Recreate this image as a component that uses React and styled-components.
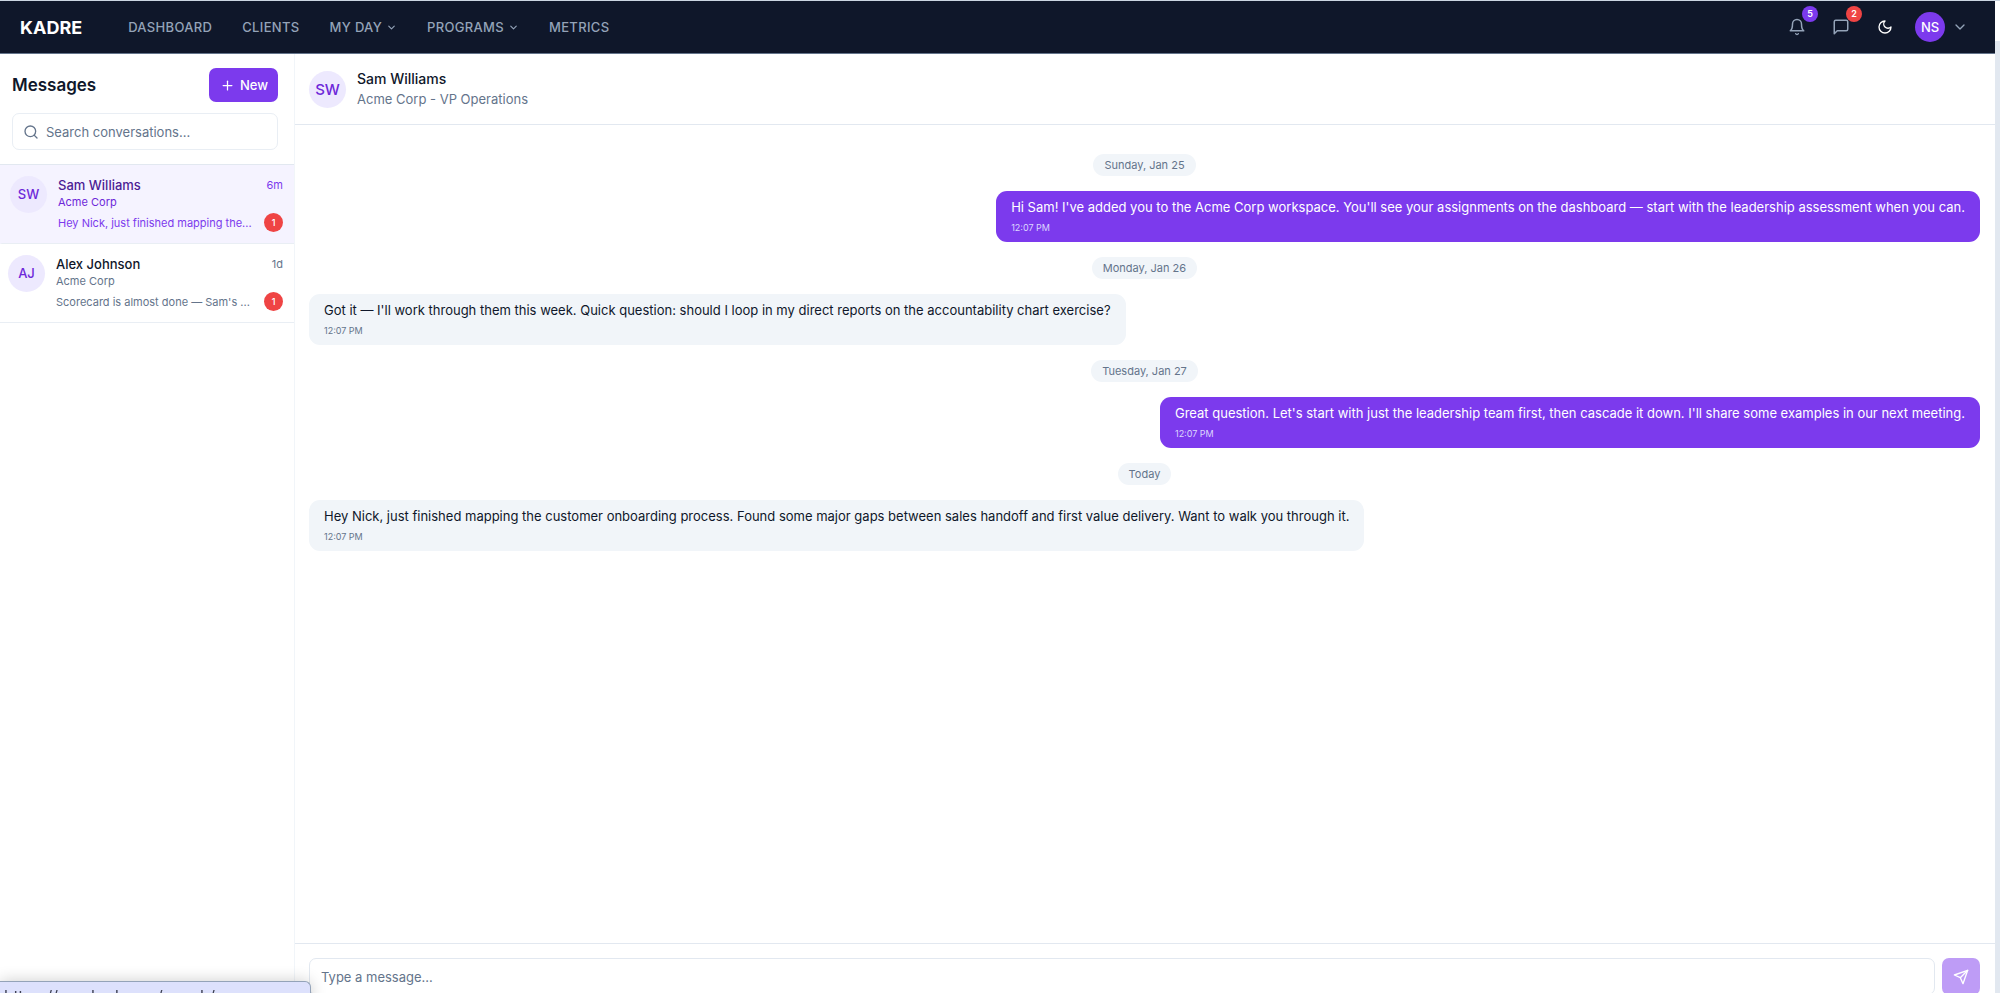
import React, { useState } from 'react'
import styled, { createGlobalStyle } from 'styled-components'
import { ChevronDown, Plus, Search } from 'lucide-react'

const links = [
    { label: "Dashboard" },
    { label: "Clients" },
    { label: "My Day", menu: true },
    { label: "Programs", menu: true },
    { label: "Metrics" },
]

const conversations = [
    { id: 1, initials: "SW", name: "Sam Williams", company: "Acme Corp", time: "6m", unread: 1, preview: "Hey Nick, just finished mapping the..." },
    { id: 2, initials: "AJ", name: "Alex Johnson", company: "Acme Corp", time: "1d", unread: 1, preview: "Scorecard is almost done — Sam's ..." },
]

const days = [
    { day: "Sunday, Jan 25", mine: true, text: "Hi Sam! I've added you to the Acme Corp workspace. You'll see your assignments on the dashboard — start with the leadership assessment when you can." },
    { day: "Monday, Jan 26", mine: false, text: "Got it — I'll work through them this week. Quick question: should I loop in my direct reports on the accountability chart exercise?" },
    { day: "Tuesday, Jan 27", mine: true, text: "Great question. Let's start with just the leadership team first, then cascade it down. I'll share some examples in our next meeting." },
    { day: "Today", mine: false, text: "Hey Nick, just finished mapping the customer onboarding process. Found some major gaps between sales handoff and first value delivery. Want to walk you through it." },
]

const Icon = ({ size, children }) => (
    <svg width={size} height={size} viewBox="0 0 24 24" fill="none" stroke="currentColor" strokeWidth="2" strokeLinecap="round" strokeLinejoin="round">
        {children}
    </svg>
)

const BellIcon = () => (
    <Icon size={18}>
        <path d="M6 8a6 6 0 0 1 12 0c0 7 3 9 3 9H3s3-2 3-9" />
        <path d="M10.3 21a1.94 1.94 0 0 0 3.4 0" />
    </Icon>
)

const MessageIcon = () => (
    <Icon size={18}>
        <path d="M21 15a2 2 0 0 1-2 2H7l-4 4V5a2 2 0 0 1 2-2h14a2 2 0 0 1 2 2z" />
    </Icon>
)

const MoonIcon = () => (
    <Icon size={16}>
        <path d="M12 3a6 6 0 0 0 9 9 9 9 0 1 1-9-9Z" />
    </Icon>
)

const SendIcon = () => (
    <Icon size={16}>
        <path d="m22 2-7 20-4-9-9-4Z" />
        <path d="M22 2 11 13" />
    </Icon>
)

const App = () => {
    const [active, setActive] = useState(1)
    const [draft, setDraft] = useState("")
    const [query, setQuery] = useState("")

    const shown = conversations.filter((c) => c.name.toLowerCase().includes(query.toLowerCase()))

    return (
        <Window>
            <GlobalStyle />
            <Page>
                <Navbar>
                    <Logo href="#">KADRE</Logo>
                    <NavLinks>
                        {links.map((link) => (
                            <NavLink key={link.label} href="#">
                                {link.label}
                                {link.menu && <ChevronDown size={11} strokeWidth={2.5} />}
                            </NavLink>
                        ))}
                    </NavLinks>
                    <NavActions>
                        <IconButton aria-label="Notifications">
                            <BellIcon />
                            <NavBadge $color="#7c3aed">5</NavBadge>
                        </IconButton>
                        <IconButton aria-label="Messages">
                            <MessageIcon />
                            <NavBadge $color="#ef4444">2</NavBadge>
                        </IconButton>
                        <IconButton aria-label="Toggle theme" $bright>
                            <MoonIcon />
                        </IconButton>
                        <UserMenu aria-label="Account">
                            <UserInitials>NS</UserInitials>
                            <ChevronDown size={16} />
                        </UserMenu>
                    </NavActions>
                </Navbar>
                <Body>
                    <Sidebar>
                        <SidebarTop>
                            <SidebarHeading>
                                <h1>Messages</h1>
                                <NewButton>
                                    <Plus size={15} />
                                    New
                                </NewButton>
                            </SidebarHeading>
                            <SearchBox>
                                <Search size={16} />
                                <input aria-label="Search conversations" placeholder="Search conversations..." value={query} onChange={(e) => setQuery(e.target.value)} />
                            </SearchBox>
                        </SidebarTop>
                        {shown.map((c) => (
                            <Conversation key={c.id} $active={c.id === active} onClick={() => setActive(c.id)}>
                                <Avatar>{c.initials}</Avatar>
                                <Summary>
                                    <SummaryRow>
                                        <Name>{c.name}</Name>
                                        <Time>{c.time}</Time>
                                    </SummaryRow>
                                    <Company>{c.company}</Company>
                                    <SummaryRow>
                                        <Preview>{c.preview}</Preview>
                                        <Unread>{c.unread}</Unread>
                                    </SummaryRow>
                                </Summary>
                            </Conversation>
                        ))}
                    </Sidebar>
                    <Chat>
                        <ChatHeader>
                            <Avatar $large>SW</Avatar>
                            <div>
                                <ChatName>Sam Williams</ChatName>
                                <ChatRole>Acme Corp - VP Operations</ChatRole>
                            </div>
                        </ChatHeader>
                        <Thread>
                            {days.map((d) => (
                                <React.Fragment key={d.day}>
                                    <DayLabel>{d.day}</DayLabel>
                                    <Bubble $mine={d.mine}>
                                        {d.text}
                                        <Sent $mine={d.mine}>12:07 PM</Sent>
                                    </Bubble>
                                </React.Fragment>
                            ))}
                        </Thread>
                        <Composer onSubmit={(e) => e.preventDefault()}>
                            <MessageInput aria-label="Message" placeholder="Type a message..." value={draft} onChange={(e) => setDraft(e.target.value)} />
                            <SendButton aria-label="Send">
                                <SendIcon />
                            </SendButton>
                        </Composer>
                    </Chat>
                </Body>
            </Page>
            <Gutter />
            <LinkStatus>https://app.kadre.co/coach/messages</LinkStatus>
        </Window>
    )
}

export default App;

const GlobalStyle = createGlobalStyle`
    * {
        box-sizing:border-box;
    }
    body {
        margin:0;
        overflow:hidden;
        background-color:white;
        color:#0f172a;
        font-family:Inter, sans-serif;
        font-size:13px;
    }
    button, input {
        font:inherit;
        color:inherit;
        border:none;
        background:none;
        padding:0;
    }
    button {
        cursor:pointer;
    }
    svg {
        flex-shrink:0;
    }
`;

const Window = styled.div`
    display:flex;
    height:calc(100vh + 16px);
    border-top:1px solid #cbd5e1;
`;

const Page = styled.div`
    flex:1;
    min-width:0;
    display:flex;
    flex-direction:column;
`;

const Gutter = styled.div`
    width:5px;
    margin-top:40px;
    background-color:#e2e8f0;
`;

const Navbar = styled.nav`
    display:flex;
    align-items:center;
    height:53px;
    padding:0 27px 0 20px;
    background-color:#0f172a;
    border-bottom:1px solid #64748b;
    color:#94a3b8;
`;

const Logo = styled.a`
    font-size:18px;
    font-weight:700;
    color:white;
    text-decoration:none;
`;

const NavLinks = styled.div`
    display:flex;
    gap:30px;
    margin-left:46px;
`;

const NavLink = styled.a`
    display:flex;
    align-items:center;
    gap:4px;
    font-weight:500;
    letter-spacing:0.025em;
    text-transform:uppercase;
    text-decoration:none;
    color:#94a3b8;
`;

const NavActions = styled.div`
    display:flex;
    align-items:center;
    gap:8px;
    margin-left:auto;
`;

const IconButton = styled.button`
    position:relative;
    display:flex;
    align-items:center;
    justify-content:center;
    width:36px;
    height:36px;
    color:${(props) => props.$bright ? 'white' : '#94a3b8'};
`;

const NavBadge = styled.span`
    position:absolute;
    top:-3px;
    right:-3px;
    width:16px;
    height:16px;
    border-radius:8px;
    background-color:${(props) => props.$color};
    color:white;
    font-size:9px;
    font-weight:600;
    line-height:16px;
    text-align:center;
`;

const UserMenu = styled.button`
    display:flex;
    align-items:center;
    gap:7px;
    margin-left:4px;
`;

const UserInitials = styled.span`
    width:30px;
    height:30px;
    border-radius:15px;
    background-color:#7c3aed;
    color:white;
    font-weight:500;
    line-height:30px;
    text-align:center;
`;

const Body = styled.div`
    flex:1;
    display:flex;
    min-height:0;
`;

const Sidebar = styled.aside`
    width:295px;
    flex-shrink:0;
    border-right:1px solid #f1f5f9;
`;

const SidebarTop = styled.div`
    padding:14px 16px 14px 12px;
    border-bottom:1px solid #e2e8f0;
`;

const SidebarHeading = styled.div`
    display:flex;
    align-items:center;
    justify-content:space-between;
    margin-bottom:11px;

    h1 {
        margin:0;
        font-size:17px;
        font-weight:600;
    }
`;

const NewButton = styled.button`
    display:flex;
    align-items:center;
    gap:5px;
    height:34px;
    padding:0 10px 0 11px;
    border-radius:7px;
    background-color:#7c3aed;
    color:white;
    font-weight:500;
`;

const SearchBox = styled.label`
    display:flex;
    align-items:center;
    gap:7px;
    height:37px;
    padding:0 10px;
    border:1px solid #e9eef4;
    border-radius:7px;
    color:#64748b;

    input {
        flex:1;
        min-width:0;
        outline:none;
    }
    input::placeholder {
        color:#64748b;
    }
`;

const Avatar = styled.span`
    flex-shrink:0;
    width:37px;
    height:37px;
    border-radius:50%;
    background-color:#ede9fe;
    color:#6d28d9;
    font-size:${(props) => props.$large ? 15 : 13}px;
    font-weight:500;
    line-height:37px;
    text-align:center;
`;

const Name = styled.span`
    font-weight:500;
    line-height:18px;
`;

const Time = styled.span`
    font-size:11px;
`;

const Company = styled.div`
    font-size:11px;
    line-height:16px;
`;

const Preview = styled.span`
    font-size:11px;
    line-height:18px;
    white-space:nowrap;
`;

const Conversation = styled.button`
    display:flex;
    align-items:flex-start;
    gap:11px;
    width:100%;
    height:79px;
    padding:11px 11px 0 8px;
    border-left:${(props) => props.$active ? '2px solid #f5f3ff' : 'none'};
    border-bottom:1px solid #e9eef4;
    background-color:${(props) => props.$active ? '#f5f3ff' : 'white'};
    color:${(props) => props.$active ? '#7c3aed' : '#64748b'};
    text-align:left;

    ${Name} {
        color:${(props) => props.$active ? '#4c1d95' : '#0f172a'};
    }
    ${Company} {
        color:${(props) => props.$active ? '#6d28d9' : '#64748b'};
    }
`;

const Summary = styled.span`
    flex:1;
    min-width:0;
`;

const SummaryRow = styled.span`
    display:flex;
    align-items:center;
    justify-content:space-between;

    ${Company} + & {
        margin-top:3px;
    }
`;

const Unread = styled.span`
    flex-shrink:0;
    width:19px;
    height:19px;
    border-radius:50%;
    background-color:#ef4444;
    color:white;
    font-size:9px;
    font-weight:500;
    line-height:19px;
    text-align:center;
`;

const Chat = styled.main`
    flex:1;
    min-width:0;
    display:flex;
    flex-direction:column;
`;

const ChatHeader = styled.header`
    display:flex;
    align-items:center;
    gap:11px;
    height:71px;
    padding:0 14px;
    border-bottom:1px solid #e2e8f0;
`;

const ChatName = styled.div`
    font-size:14px;
    font-weight:500;
    line-height:20px;
`;

const ChatRole = styled.div`
    line-height:20px;
    color:#64748b;
`;

const Thread = styled.div`
    flex:1;
    min-height:0;
    display:flex;
    flex-direction:column;
    gap:15px;
    padding:29px 15px 15px 14px;
`;

const DayLabel = styled.div`
    align-self:center;
    padding:0 11px;
    border-radius:11px;
    background-color:#f1f5f9;
    color:#64748b;
    font-size:11px;
    line-height:22px;
`;

const Bubble = styled.div`
    align-self:${(props) => props.$mine ? 'flex-end' : 'flex-start'};
    padding:7px 15px;
    border-radius:11px;
    background-color:${(props) => props.$mine ? '#7c3aed' : '#f1f5f9'};
    color:${(props) => props.$mine ? 'white' : '#0f172a'};
    line-height:18px;
`;

const Sent = styled.div`
    margin-top:5px;
    font-size:9px;
    line-height:14px;
    color:${(props) => props.$mine ? '#ddd6fe' : '#64748b'};
`;

const Composer = styled.form`
    display:flex;
    gap:7px;
    height:66px;
    padding:14px 15px 0 14px;
    border-top:1px solid #e2e8f0;
`;

const MessageInput = styled.input`
    flex:1;
    min-width:0;
    height:37px;
    padding:0 11px;
    border:1px solid #e2e8f0;
    border-radius:7px;

    &::placeholder {
        color:#64748b;
    }
`;

const SendButton = styled.button`
    display:flex;
    align-items:center;
    justify-content:center;
    width:38px;
    height:37px;
    border-radius:7px;
    background-color:#be9cf6;
    color:white;
`;

const LinkStatus = styled.div`
    position:fixed;
    left:0;
    bottom:-12px;
    width:311px;
    height:24px;
    padding-left:4px;
    border-top:1px solid #94a3b8;
    border-right:1px solid #94a3b8;
    border-top-right-radius:6px;
    background-color:#dde1fc;
    box-shadow:0 0 16px rgba(0, 0, 0, 0.2);
    color:#3f4254;
    font-size:16px;
    line-height:28px;
    white-space:nowrap;
`;
